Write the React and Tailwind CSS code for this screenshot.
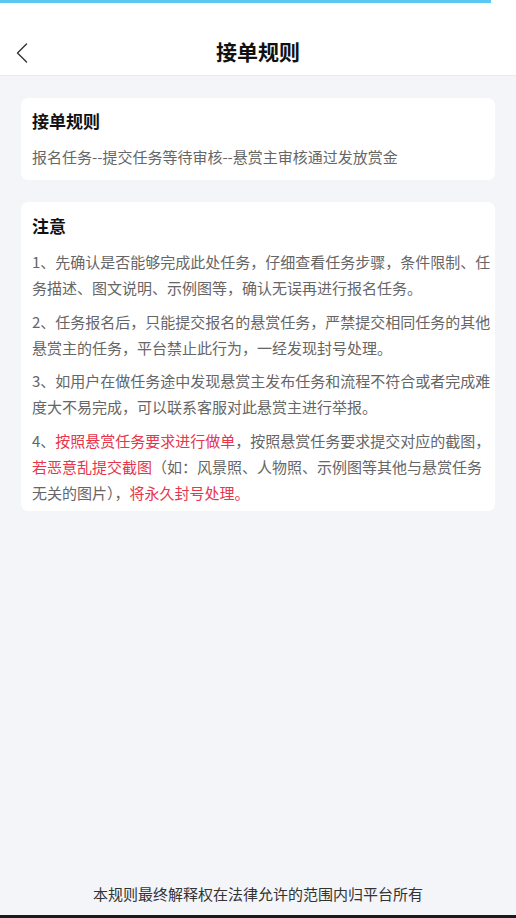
import React from "react";

const font = { fontFamily: '"Noto Sans CJK SC", "Noto Sans", sans-serif' };

export default function App() {
  return (
    <div className="w-[516px] h-[918px] flex flex-col bg-[#f4f5f9] overflow-hidden" style={font}>
      <div className="bg-white h-[76px] shrink-0 border-b border-[#e9e9ee] flex flex-col">
        <div className="h-[3px] w-[491px] bg-[#5ac8f0]" />
        <div className="relative flex-1 flex items-center justify-center pt-[23px]">
          <svg className="absolute left-[15px] top-[39px]" width="14" height="22" viewBox="0 0 14 22" fill="none">
            <path d="M11.5 2 L2.5 11 L11.5 20" stroke="#333" strokeWidth="1.4" strokeLinecap="round" strokeLinejoin="round" />
          </svg>
          <div className="text-[21px] font-bold text-[#111] leading-[28px]">接单规则</div>
        </div>
      </div>

      <div className="flex flex-col gap-[22px] pt-[22px] px-[21px]">
        <div className="bg-white rounded-[7px] pl-[11px] pr-[2px] pt-[11px] pb-[10px]">
          <div className="text-[17px] font-bold text-[#111] leading-[24px]">接单规则</div>
          <div className="mt-[11px] text-[15px] text-[#666] leading-[26px]">报名任务--提交任务等待审核--悬赏主审核通过发放赏金</div>
        </div>

        <div className="bg-white rounded-[7px] pl-[11px] pr-[2px] pt-[12px] pb-[5px]">
          <div className="text-[17px] font-bold text-[#111] leading-[24px]">注意</div>
          <div className="mt-[11px] flex flex-col gap-[7.5px] text-[15px] text-[#666] leading-[26px]">
            <p>1、先确认是否能够完成此处任务，仔细查看任务步骤，条件限制、任务描述、图文说明、示例图等，确认无误再进行报名任务。</p>
            <p>2、任务报名后，只能提交报名的悬赏任务，严禁提交相同任务的其他悬赏主的任务，平台禁止此行为，一经发现封号处理。</p>
            <p>3、如用户在做任务途中发现悬赏主发布任务和流程不符合或者完成难度大不易完成，可以联系客服对此悬赏主进行举报。</p>
            <p>
              4、<span className="text-[#e8354b]">按照悬赏任务要求进行做单</span>，按照悬赏任务要求提交对应的截图，<span className="text-[#e8354b]">若恶意乱提交截图</span>（如：风景照、人物照、示例图等其他与悬赏任务无关的图片），<span className="text-[#e8354b]">将永久封号处理。</span>
            </p>
          </div>
        </div>
      </div>

      <div className="flex-1" />
      <div className="text-center text-[15px] text-[#333] leading-[24px] pb-[9px]">本规则最终解释权在法律允许的范围内归平台所有</div>
      <div className="h-[3px] bg-[#1a1a1a] shrink-0" />
    </div>
  );
}
